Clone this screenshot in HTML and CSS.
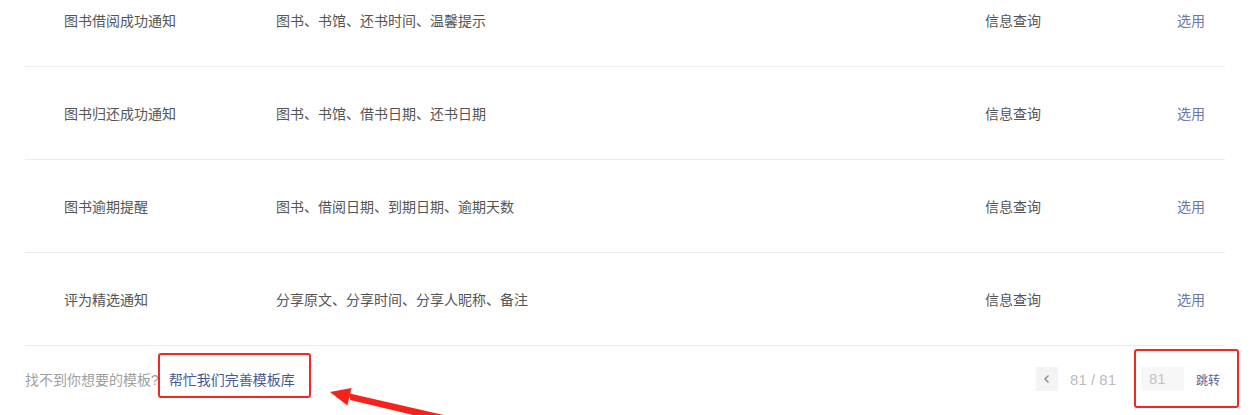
FILE: index.html
```html
<!DOCTYPE html>
<html lang="zh-CN">
<head>
<meta charset="utf-8">
<title>模板库</title>
<link rel="stylesheet" href="styles.css">
</head>
<body>
<div class="page">
  <div class="table">
    <div class="row">
      <div class="c1">图书借阅成功通知</div>
      <div class="c2">图书、书馆、还书时间、温馨提示</div>
      <div class="c3">信息查询</div>
      <div class="c4"><a class="pick">选用</a></div>
    </div>
    <div class="row">
      <div class="c1">图书归还成功通知</div>
      <div class="c2">图书、书馆、借书日期、还书日期</div>
      <div class="c3">信息查询</div>
      <div class="c4"><a class="pick">选用</a></div>
    </div>
    <div class="row">
      <div class="c1">图书逾期提醒</div>
      <div class="c2">图书、借阅日期、到期日期、逾期天数</div>
      <div class="c3">信息查询</div>
      <div class="c4"><a class="pick">选用</a></div>
    </div>
    <div class="row">
      <div class="c1">评为精选通知</div>
      <div class="c2">分享原文、分享时间、分享人昵称、备注</div>
      <div class="c3">信息查询</div>
      <div class="c4"><a class="pick">选用</a></div>
    </div>
  </div>
  <div class="footer">
    <div class="hint">
      <span class="muted">找不到你想要的模板?</span>
      <a class="help">帮忙我们完善模板库</a>
    </div>
    <div class="pager">
      <button class="prev" aria-label="上一页">
        <svg width="10" height="10" viewBox="0 0 10 10"><path d="M6.5 1.5 L3 5 L6.5 8.5" fill="none" stroke="#888" stroke-width="1.4"/></svg>
      </button>
      <span class="count">81 / 81</span>
      <span class="jump-input">81</span>
      <a class="jump">跳转</a>
    </div>
  </div>
</div>
<div class="mark mark-help"></div>
<div class="mark mark-jump"></div>
<svg class="arrow" width="1256" height="415" viewBox="0 0 1256 415">
  <polygon points="330,392 351.5,388 347.3,405.4" fill="#f5231b"/>
  <polygon points="348.5,393.3 350.3,400.1 468,428 470,421" fill="#f5231b"/>
</svg>
</body>
</html>
```
FILE: styles.css
```css
html, body {
  margin: 0;
  padding: 0;
  background: #fff;
  height: 415px;
  overflow: hidden;
  font-family: "Liberation Sans", "Noto Sans CJK SC", sans-serif;
  font-size: 14px;
  color: #555;
}
.page {
  padding: 0 31px 0 25px;
}
.table {
  margin-top: -26px;
}
.row {
  display: grid;
  grid-template-columns: 212px 709px 192px 1fr;
  align-items: center;
  height: 92px;
  padding-left: 39px;
  border-bottom: 1px solid #ececec;
}
.c1, .c2, .c3 {
  color: #555;
}
.pick {
  color: #6c78a6;
  cursor: pointer;
}
.footer {
  display: flex;
  align-items: center;
  justify-content: space-between;
  height: 66px;
}
.hint {
  display: flex;
  align-items: center;
  gap: 10px;
}
.muted {
  color: #a0a0a0;
}
.help {
  color: #4a5891;
}
.pager {
  display: flex;
  align-items: center;
  margin-right: 5px;
}
.prev {
  width: 22px;
  height: 24px;
  border: none;
  background: #f4f4f4;
  display: flex;
  align-items: center;
  justify-content: center;
  padding: 0;
  margin-right: 12px;
}
.count {
  color: #bbb;
  font-size: 15px;
  margin-right: 25px;
}
.jump-input {
  width: 35px;
  height: 24px;
  line-height: 24px;
  padding-left: 8px;
  background: #f7f7f7;
  color: #c4c4c4;
  font-size: 15px;
  margin-right: 12px;
}
.jump {
  color: #56629a;
  font-size: 12px;
}
.mark {
  position: absolute;
  border: 2px solid #f02a23;
  border-radius: 3px;
  box-sizing: border-box;
}
.mark-help {
  left: 158px;
  top: 353px;
  width: 153px;
  height: 45px;
}
.mark-jump {
  left: 1134px;
  top: 349px;
  width: 105px;
  height: 59px;
}
.arrow {
  position: absolute;
  left: 0;
  top: 0;
  pointer-events: none;
}
```
